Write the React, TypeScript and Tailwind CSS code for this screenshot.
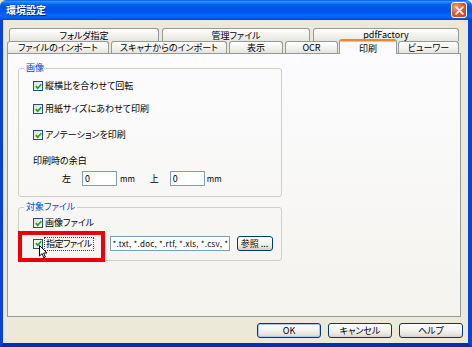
import clsx from 'clsx';

const FONT = "[font-family:'Noto_Sans_CJK_JP','Noto_Sans',sans-serif] [font-feature-settings:'palt']";

function Check({ hover }: { hover?: boolean }) {
  return (
    <span
      className={clsx(
        'flex h-[10px] w-[10px] shrink-0 items-center justify-center border border-[#1C5180]',
        hover
          ? 'bg-[linear-gradient(135deg,#FDD889,#F8B030)]'
          : 'bg-[linear-gradient(135deg,#DCDCD7,#FFFFFF)]',
      )}
    >
      <span className={clsx('flex h-[8px] w-[8px] items-center justify-center', hover && 'bg-[#F6F5EE]')}>
        <svg width="7" height="7" viewBox="0 0 7 7">
          <path d="M0.8 3.2 L2.7 5.2 L6.3 1.2" stroke="#21A121" strokeWidth="1.7" fill="none" />
        </svg>
      </span>
    </span>
  );
}

function Tab({ label, className }: { label: string; className?: string }) {
  return (
    <div
      className={clsx(
        'flex h-full items-center justify-center rounded-t-[3px] border border-b-0 border-[#919B9C] bg-[linear-gradient(#FFFFFF,#F1F0EC_60%,#E6E4DC)] text-[9px] leading-none text-black',
        className,
      )}
    >
      {label}
    </div>
  );
}

function Button({ label, primary }: { label: string; primary?: boolean }) {
  return (
    <div
      className={clsx(
        'flex h-[15px] w-[64px] items-center justify-center rounded-[3px] border border-[#003C74] bg-[linear-gradient(#FFFFFF,#F3F2EE_50%,#E4E1D8_85%,#D6D0C5)] text-[9px] leading-none text-black',
        primary && 'shadow-[inset_0_0_0_1px_#A9C8F5]',
      )}
    >
      {label}
    </div>
  );
}

function Group({ title, children, className }: { title: string; children: React.ReactNode; className?: string }) {
  return (
    <fieldset className={clsx('w-[264px] rounded-[3px] border border-[#D0D0BF] px-0', className)}>
      <legend className="ml-[5px] px-[2px] text-[9px] leading-[12px] text-[#0046D5]">{title}</legend>
      {children}
    </fieldset>
  );
}

export default function App() {
  return (
    <div className={clsx('flex h-[347px] w-[472px] flex-col overflow-hidden bg-[#ECE9D8]', FONT)}>
      <div className="flex h-[20px] shrink-0 items-center justify-between rounded-t-[6px] bg-[linear-gradient(#0058EE_0%,#3593FF_8%,#127DFF_14%,#0262EE_22%,#0055E5_35%,#0056EC_60%,#026AFE_78%,#0062EF_88%,#0048C4_100%)] pl-[6px] pr-[5px]">
        <span className="text-[10px] font-bold leading-none text-white [text-shadow:1px_1px_0_#0A1883]">環境設定</span>
        <div className="flex h-[16px] w-[16px] items-center justify-center rounded-[3px] border border-white bg-[radial-gradient(circle_at_30%_30%,#F0A080,#E35A32_45%,#C23B18)]">
          <svg width="9" height="9" viewBox="0 0 9 9">
            <path d="M1.2 1.2 L7.8 7.8 M7.8 1.2 L1.2 7.8" stroke="white" strokeWidth="1.8" strokeLinecap="round" />
          </svg>
        </div>
      </div>

      <div className="flex flex-1 flex-col border-x-[3px] border-b-[4px] border-x-[#0842D9] border-b-[#0031B5] pl-[4px] pr-[5px] pt-[8px] [border-right-width:4px]">
        <div className="flex h-[13px] pl-[2px]">
          <Tab label="フォルダ指定" className="w-[150px]" />
          <Tab label="管理ファイル" className="ml-[3px] w-[148px]" />
          <Tab label="pdfFactory" className="ml-[3px] w-[146px] pb-[2px]" />
        </div>
        <div className="flex h-[12px] items-start">
          <Tab label="ファイルのインポート" className="w-[102px]" />
          <Tab label="スキャナからのインポート" className="ml-[2px] w-[116px]" />
          <Tab label="表示" className="ml-[2px] w-[54px]" />
          <Tab label="OCR" className="ml-[2px] w-[53px]" />
          <div className="relative z-10 -mt-[2px] ml-[1px] flex h-[15px] w-[58px] flex-col rounded-t-[3px] border-x border-[#919B9C] bg-[#FCFCFE]">
            <div className="h-[3px] rounded-t-[2px] border-t-2 border-[#E68B2C] bg-[#FFC73C]" />
            <div className="flex flex-1 items-center justify-center text-[9px] leading-none text-black">印刷</div>
          </div>
          <Tab label="ビューワー" className="ml-[1px] w-[61px]" />
        </div>

        <div className="relative h-[264px] w-[454px] border border-[#919B9C] bg-[linear-gradient(#FCFCFE,#F4F3EE)] pl-[10px] pt-[8px] text-[9px] leading-[12px] text-black">
          <Group title="画像" className="pb-[10px]">
            <div className="flex flex-col pl-[14px]">
              <div className="mt-[6px] flex h-[12px] items-center gap-[2px]">
                <Check />
                <span>縦横比を合わせて回転</span>
              </div>
              <div className="mt-[11px] flex h-[12px] items-center gap-[2px]">
                <Check />
                <span>用紙サイズにあわせて印刷</span>
              </div>
              <div className="mt-[14px] flex h-[12px] items-center gap-[2px]">
                <Check />
                <span>アノテーションを印刷</span>
              </div>
              <div className="mt-[14px] h-[12px]">印刷時の余白</div>
              <div className="mt-[4px] flex h-[15px] items-center">
                <span className="ml-[29px]">左</span>
                <div className="ml-[11px] flex h-[15px] w-[35px] items-center border border-[#7F9DB9] bg-white pl-[2px] text-[9px]">0</div>
                <span className="ml-[3px] text-[8px]">mm</span>
                <span className="ml-[15px]">上</span>
                <div className="ml-[11px] flex h-[15px] w-[35px] items-center border border-[#7F9DB9] bg-white pl-[2px] text-[9px]">0</div>
                <span className="ml-[2px] text-[8px]">mm</span>
              </div>
            </div>
          </Group>

          <Group title="対象ファイル" className="mt-[4px] pb-[9px]">
            <div className="flex flex-col pl-[14px]">
              <div className="mt-[4px] flex h-[12px] items-center gap-[2px]">
                <Check />
                <span>画像ファイル</span>
              </div>
              <div className="mt-[7px] flex h-[15px] items-center">
                <Check hover />
                <span className="ml-[1px] border border-dotted border-[#444] px-[1px] leading-[12px] tracking-[-0.6px]">指定ファイル</span>
                <div className="ml-[16px] flex h-[15px] w-[120px] items-center overflow-hidden whitespace-nowrap border border-[#7F9DB9] bg-white pl-[2px] text-[8px] tracking-[0.25px]">
                  *.txt, *.doc, *.rtf, *.xls, *.csv, *
                </div>
                <div className="ml-[7px] flex h-[15px] w-[36px] items-center justify-center rounded-[3px] border border-[#003C74] bg-[linear-gradient(#FFFFFF,#F0EFEA_60%,#D6D0C5)] text-[9px] leading-none">
                  参照 ...
                </div>
              </div>
            </div>
          </Group>

          <div className="pointer-events-none absolute left-[10px] top-[177px] h-[31px] w-[87px] border-[4px] border-[#E8000B]" />
          <svg className="absolute left-[31px] top-[191px]" width="9" height="14" viewBox="0 0 9 14">
            <path d="M0.5 0.5 L0.5 11 L3 8.6 L4.8 12.8 L6.4 12.1 L4.6 8 L8 8 Z" fill="white" stroke="black" strokeWidth="1" strokeLinejoin="round" />
          </svg>
        </div>

        <div className="mt-[6px] flex justify-end gap-[7px]">
          <Button label="OK" primary />
          <Button label="キャンセル" />
          <Button label="ヘルプ" />
        </div>
      </div>
    </div>
  );
}
